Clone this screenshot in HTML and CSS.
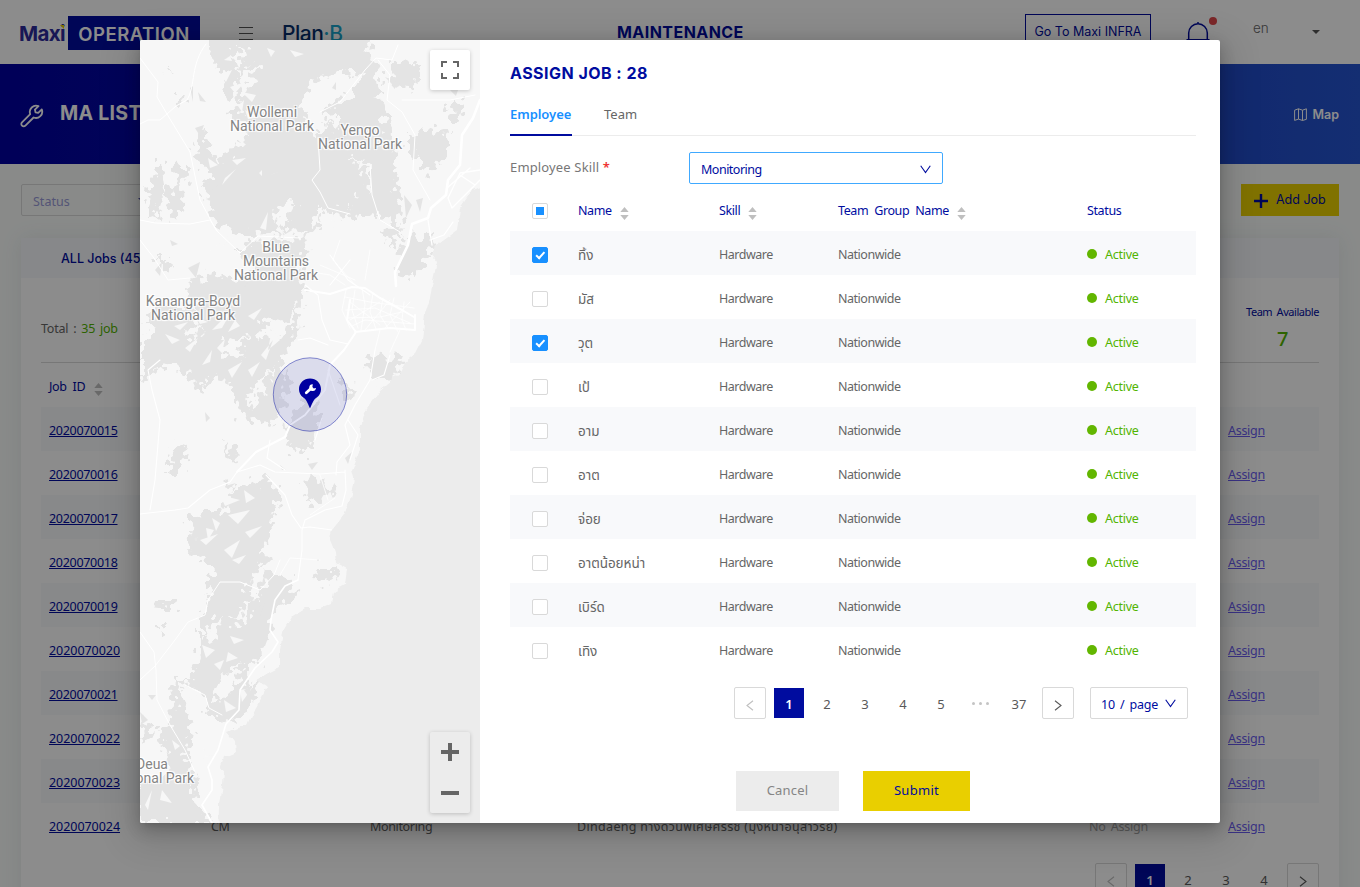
FILE: index.html
```html
<!DOCTYPE html>
<html lang="en">
<head>
<meta charset="utf-8">
<title>Maxi Operation</title>
<link rel="stylesheet" href="styles.css">
</head>
<body>
<svg class="defs" width="0" height="0">
  <symbol id="sorter" viewBox="0 0 9 13"><path d="M4.5 0 8.7 5H.3zM4.5 13 .3 8h8.4z" fill="#bfbfbf"/></symbol>
  <symbol id="left" viewBox="0 0 8 11"><path d="M7 .8 1 5.5 7 10.2" fill="none" stroke="currentColor" stroke-width="1.1"/></symbol>
  <symbol id="right" viewBox="0 0 8 11"><path d="M1 .8 7 5.5 1 10.2" fill="none" stroke="currentColor" stroke-width="1.1"/></symbol>
  <symbol id="down" viewBox="0 0 11 9"><path d="M.7 .7 5.5 7.6 10.3 .7" fill="none" stroke="currentColor" stroke-width="1.1"/></symbol>
</svg>

<div class="page">
  <header class="topbar">
    <div class="logo"><span class="maxi">Maxi<i></i></span><span class="operation">OPERATION</span></div>
    <div class="burger"><i></i><i></i><i></i></div>
    <div class="planb">Plan<b>·B</b></div>
    <div class="heading">MAINTENANCE</div>
    <div class="infra">Go To Maxi INFRA</div>
    <div class="bell">
      <svg width="24" height="26" viewBox="0 0 24 26" fill="none" stroke="#000c9f" stroke-width="1.5"><path d="M2.700 18V11a9.300 9.300 0 0 1 18.600 0v7M.500 17.700h23M12 0v2"/></svg>
      <i></i>
    </div>
    <div class="lang">en</div>
    <div class="caret"></div>
  </header>

  <section class="hero">
    <svg class="tool" width="24" height="24" viewBox="0 0 24 24" fill="none" stroke="#fff" stroke-width="1.8" stroke-linejoin="round"><path d="M18.5 2.2a6.3 6.3 0 0 0-8.3 8L2 18.3a2.3 2.3 0 0 0 3.4 3.4l8.2-8.2a6.3 6.3 0 0 0 8.2-8.1l-3.6 3.4-2.7-.5-.6-2.7z"/></svg>
    <h1>MA LIST</h1>
    <div class="maplink"><svg width="13" height="13" viewBox="0 0 13 13" fill="none" stroke="#fff"><path d="M.6 2.2 4.5.8l4 1.4L12.4.8v10.500l-3.900 1.200-4-1.400L.6 12.400zM4.500.8v10.300M8.500 2.200v10.300"/></svg>Map</div>
  </section>

  <section class="filters">
    <div class="status-select">Status<i></i></div>
    <div class="addjob"><svg width="14" height="14" viewBox="0 0 14 14"><path d="M7 0v14M0 7h14" stroke="#000c9f" stroke-width="2.4"/></svg>Add Job</div>
  </section>

  <main class="card">
    <div class="card-head">ALL Jobs (45)</div>
    <div class="card-body">
      <div class="totals">
        <div class="total">Total : <b>35 job</b></div>
        <div class="avail"><span>Team Available</span><b>7</b></div>
      </div>
      <div class="jobs">
        <div class="job job-head"><span>Job ID <svg width="9" height="13"><use href="#sorter"/></svg></span></div>
        <div class="job"><a>2020070015</a><span></span><span></span><span></span><span></span><a>Assign</a></div>
        <div class="job"><a>2020070016</a><span></span><span></span><span></span><span></span><a>Assign</a></div>
        <div class="job"><a>2020070017</a><span></span><span></span><span></span><span></span><a>Assign</a></div>
        <div class="job"><a>2020070018</a><span></span><span></span><span></span><span></span><a>Assign</a></div>
        <div class="job"><a>2020070019</a><span></span><span></span><span></span><span></span><a>Assign</a></div>
        <div class="job"><a class="wide">2020070020</a><span></span><span></span><span></span><span></span><a>Assign</a></div>
        <div class="job"><a>2020070021</a><span></span><span></span><span></span><span></span><a>Assign</a></div>
        <div class="job"><a class="wide">2020070022</a><span></span><span></span><span></span><span></span><a>Assign</a></div>
        <div class="job"><a class="wide">2020070023</a><span></span><span></span><span></span><span></span><a>Assign</a></div>
        <div class="job"><a class="wide">2020070024</a><span>CM</span><span>Monitoring</span><span class="addr">Dindaeng ทางด่วนพิเศษศรีรัช (มุ่งหน้าอนุสาวรีย์)</span><span class="none">No Assign</span><a>Assign</a></div>
      </div>
      <div class="pager page-pager">
        <span class="box off"><svg width="8" height="11"><use href="#left"/></svg></span><span class="num on">1</span><span class="num">2</span><span class="num">3</span><span class="num">4</span><span class="box"><svg width="8" height="11"><use href="#right"/></svg></span>
      </div>
    </div>
  </main>
</div>

<div class="mask">
  <div class="modal">
    <div class="map">
      <svg class="terrain" width="340" height="783" viewBox="0 0 340 783">
        <defs><filter id="rough" x="0" y="0" width="100%" height="100%"><feTurbulence type="fractalNoise" baseFrequency=".13" numOctaves="2" seed="4"/><feDisplacementMap in="SourceGraphic" scale="26" xChannelSelector="R" yChannelSelector="G"/></filter>
        <filter id="coast" x="0" y="0" width="100%" height="100%"><feTurbulence type="fractalNoise" baseFrequency=".1" numOctaves="2" seed="9"/><feDisplacementMap in="SourceGraphic" scale="6" xChannelSelector="R" yChannelSelector="G"/></filter></defs>
        <rect width="340" height="783" fill="#f7f7f7"/>
        <g filter="url(#rough)" fill="#e4e4e4">
          <path d="M67-10 76 25 85 30 83 55 100 60 90 75 108 82 105 100 95 110 82 112 80 125 60 90 55 112 58 125 70 130 72 140 60 148 72 165 70 180 88 190 102 198 102 215 115 225 105 240 75 235 50 240 48 256 60 270 20 262 5 280 18 290 0 305V340L10 335 25 325 40 330 62 352 75 330 95 350 100 375 130 385 143 370 147 340 140 320 157 300 160 262 165 245 160 220 168 195 180 182 180 168 200 175 220 178 235 172 255 190 262 170 253 125 258 110 250 95 240 55 236 25 232 15 229-10z"/>
          <path d="M250 23 278 22 282 33 272 48 248 46zM268 95 310 88 306 115 288 135 275 115zM312 60 325 62 318 85 308 75zM240 190 262 185 252 210zM262 200 295 195 292 215 270 238 256 232zM15 125 22 125 26 150 15 182 8 160zM35 125 45 124 44 165 32 182 26 155 36 142zM27 25 32 28 29 34zM38 58 45 58 43 68zM15 218 30 218 26 232z"/>
          <path d="M228 315 250 318 266 316 255 338 240 345 230 330zM200 335 218 355 208 360zM135 330 148 340 145 365 133 350zM165 355 178 365 180 380 172 390 168 413 150 412 148 398 150 378zM35 403 46 407 42 430 28 430zM83 400 100 415 92 424zM87 442 95 444 90 450zM52 478 85 470 95 452 128 436 140 452 132 482 125 500 128 530 150 540 156 556 135 570 128 600 118 618 105 645 122 640 112 665 100 682 80 678 58 668 52 690 45 715 58 742 52 760 74 783H0V740L30 735 20 690 33 680 30 640 50 640 60 610 60 580 72 555 65 545 75 530 50 515zM165 440 182 438 195 455 170 465zM175 528 200 528 192 542 176 540zM17 560 35 560 34 570 16 570zM18 584 26 584 20 596zM2 680 15 690 0 705z"/>
        </g>
        <g filter="url(#rough)" fill="#f7f7f7">
          <path d="M170 42 200 30 219 34 217 48 200 62 184 68 178 98 172 90 167 80 163 65zM180 75 200 74 200 83 180 82zM178 83 191 85 190 92 178 91zM210 118 230 126 232 150 228 155 225 130zM211 149 219 152 215 157zM97 5 106 12 98 34 94 20zM108 28 122 20 105 55 98 42zM140 164 155 162 140 190 132 188zM173 171 192 178 212 170 190 190 178 186zM76 205 95 195 110 195 168 192 160 200 110 202zM120 285 145 280 155 263 150 292 122 298zM84 300 110 295 96 310 104 316 82 318zM115 345 135 325 118 358zM105 358 120 350 112 370zM42 290 62 286 52 300zM65 590 82 575 76 600 64 602zM90 580 110 560 104 585zM80 640 104 620 88 658 74 662zM38 640 64 655 70 680 80 685 76 725 60 710 50 680zM118 525 130 522 116 560 108 548z"/>
        </g>
        <path fill="#f7f7f7" d="M105 70 120 77 108 79zM119 133 122 130 122 136zM130 135 141 131 133 134zM92 120 106 118 97 125zM85 138 96 129 82 145zM90 16 84 20 92 21zM116 55 102 52 112 62zM150 10 164 14 155 17zM127 8 135 11 131 17zM90 47 105 42 95 53zM72 290 92 270 82 288zM108 276 122 268 114 280zM62 325 72 310 70 322zM88 330 102 322 92 338zM95 280 88 292 100 286zM45 308 58 298 50 312zM132 288 128 310 140 300zM34 286 48 282 40 290zM56 277 68 282 60 284zM77 308 85 299 82 313zM121 315 133 300 126 320zM108 330 120 322 112 337zM25 294 40 300 32 304zM78 340 88 345 82 348zM80 455 100 460 85 466zM104 450 115 458 106 463zM88 475 110 470 98 484zM66 488 74 490 68 500zM84 510 100 500 92 518zM105 492 122 486 110 498zM60 500 78 494 66 505zM72 478 80 483 76 491zM92 520 106 515 99 524zM62 605 75 610 66 618zM88 612 98 618 86 622zM74 624 84 620 80 630zM90 596 104 600 94 604zM48 645 58 655 50 660zM100 650 112 648 102 662zM84 660 96 668 86 672zM62 680 70 694 64 692zM12 715 26 721 14 726zM22 750 32 763 20 760zM5 765 12 750 8 770zM32 700 40 706 35 710zM120 188 128 172 126 190zM150 200 142 196 156 188zM68 118 78 125 70 128zM80 35 92 30 86 42zM98 66 104 60 102 72z"/>
        <path fill="#e4e4e4" d="M240 95 250 90 252 102 243 104zM285 95 300 100 296 108zM264 155 272 165 266 178zM276 160 283 158 280 172zM245 37 262 44 256 48zM310 50 320 44 316 56zM50 48 53 46 53 62zM58 52 66 62 60 61zM55 88 64 85 60 96zM80 120 92 116 88 124zM72 150 82 142 80 152zM192 48 196 42 196 50zM30 200 38 204 32 206zM15 230 22 222 20 236zM48 228 60 222 56 238zM98 240 112 236 104 248zM65 372 70 378 66 382zM118 378 126 374 122 382zM168 424 178 422 172 430zM140 425 146 430 142 430zM85 446 96 443 88 449zM205 418 212 412 208 424zM115 570 125 562 120 576zM122 602 128 598 125 606zM104 650 112 646 108 656zM8 655 16 655 12 660zM0 672 8 680 2 684zM4 690 12 696 6 700z"/>
        <g fill="none" stroke="#fff" stroke-linecap="round" stroke-linejoin="round">
          <path stroke-width="1" d="M66 4C50 25 56 45 47 60L36 66 27 74 17 57 18 42 0 18M27 74 20 80 8 80 0 84M27 74 50 112 60 160 76 190 100 213 118 196 160 198M0 180 15 183 50 184 70 180 78 192M0 200 14 218 28 240 50 238M178 98 180 130 172 140 180 152 188 168 210 174M180 72 200 62 225 30 236 18 252 20 258 5M238 20 250 35 247 60 262 72 275 95 273 130 290 160M230 125 232 155 240 180 260 192M262 60 310 60 335 55M0 640 15 626 35 600 48 582 65 575 68 560 80 542 100 542 120 550 134 535 140 520M0 592 14 612 16 630 17 660 30 685 45 710 55 732M45 645 65 655 69 668 82 675"/>
          <path stroke-width="2.600" d="M340 60 333 78 322 95 320 125 308 140 306 155 291 168 288 178 272 184 268 205 255 232 256 246"/>
          <path stroke-width="1.300" d="M340 130 320 133 308 158 312 168 340 140M320 135 335 145M307 148 330 128M288 180 292 205M313 182 304 195 290 200"/>
          <path stroke-width="2" d="M165 250 190 254 212 247 225 248 240 258 262 270 274 277M210 260 207 280 216 292 204 310 190 325 185 350 165 375 150 385 145 397 116 412 97 432M215 292 250 288 275 290 275 275"/>
          <path stroke-width="1.100" d="M97 432 90 442 70 450 48 468 35 470 0 474M97 432 120 425 135 432 180 434 205 432M130 400 127 418 145 430M188 330 200 365M182 378 175 400M165 245 178 255 182 280 190 300 208 304M190 215 208 240 230 255M190 245 210 220M158 300 170 298 188 305M20 320 8 330 12 350 20 380 15 440 10 470M235 310 230 340 215 365 205 385 210 405 197 422 196 435M208 380 218 395 210 420M205 430 206 450 202 466 185 470 165 480 162 490 162 510 158 540M126 435 145 455 152 475 161 488 170 487 192 490M250 315 244 335 232 340"/>
          <path stroke-width="1.600" d="M158 540 145 546 135 560 131 580 130 590 138 602 132 612 115 628 100 650 99 670 86 684 78 710 68 727 72 740 72 750 62 765 72 783"/>
          <path stroke-width=".8" d="M206 250 202 270 210 288M215 250 212 270 218 288M222 248 225 265 221 290M233 253 230 272 236 289M243 258 240 275 248 288M254 258 250 275 258 292M264 262 262 280 266 290M205 257 230 262 274 268M206 270 235 268 270 283M206 278 240 277 262 272M212 286 225 280 275 284M210 280 240 262M225 290 250 260M245 288 270 262M210 262 240 285M180 225 215 240M200 200 193 220 215 245M230 210 225 240M160 230 190 235 205 245M240 290 235 310M260 290 250 312M140 535 150 518 180 520M170 475 195 458M180 435 188 460"/>
        </g>
        <g filter="url(#coast)"><path fill="#ececec" d="M350 144 331 152 320 168 317 190 299 203 292 215 297 222 292 245 290 258 285 275 282 300 275 314 265 322 262 332 240 350 225 372 220 388 220 410 212 430 214 438 210 460 204 475 192 490 190 500 195 512 196 522 207 528 205 545 194 552 192 564 180 569 165 569 152 577 143 592 140 610 140 627 130 632 116 640 127 647 122 657 112 674 107 685 87 692 95 702 96 712 84 717 80 728 83 730 82 745 79 765 78 800H350z"/></g>
        <circle cx="170" cy="354.500" r="36.700" fill="#000c9f" fill-opacity=".11" stroke="#000c9f" stroke-opacity=".45"/>
        <path fill="#0000a0" d="M170 338.500c6.200 0 11 4.600 11 10.700 0 3.600-1.700 6.500-4.300 8.300-2.800 1.900-4 4.500-6.700 11-2.700-6.500-3.900-9.100-6.700-11-2.600-1.800-4.300-4.700-4.300-8.300 0-6.100 4.800-10.700 11-10.700z"/>
        <path d="m166.300 352.800 4.600-4.300" stroke="#fff" stroke-width="2.800" stroke-linecap="round"/><path d="M172.800 344.300a3.400 3.400 0 1 0 3.200 3.800l-2.300.4-1.300-1.600z" fill="#fff"/>
      </svg>
      <div class="place wollemi">Wollemi<br>National Park</div>
      <div class="place yengo">Yengo<br>National Park</div>
      <div class="place blue">Blue<br>Mountains<br>National Park</div>
      <div class="place boyd">Kanangra-Boyd<br>National Park</div>
      <div class="place deua">Deua<br>National Park</div>
      <div class="full"><svg width="20" height="20" viewBox="0 0 20 20" fill="none" stroke="#666" stroke-width="2"><path d="M2 7V2h5M13 2h5v5M18 13v5h-5M7 18H2v-5"/></svg></div>
      <div class="zoom"><svg width="18" height="62" viewBox="0 0 18 62" stroke="#666" stroke-width="4"><path d="M0 9h18M9 0v18M0 50h18"/></svg></div>
    </div>

    <div class="panel">
      <h2>ASSIGN JOB : 28</h2>
      <div class="tabs"><span class="tab active">Employee</span><span class="tab">Team</span></div>
      <div class="form"><label>Employee Skill <b>*</b></label><div class="select">Monitoring<svg width="11" height="9"><use href="#down"/></svg></div></div>
      <div class="table">
        <div class="row head"><i class="cb some"></i><span>Name <svg width="9" height="13"><use href="#sorter"/></svg></span><span>Skill <svg width="9" height="13"><use href="#sorter"/></svg></span><span>Team Group Name <svg width="9" height="13"><use href="#sorter"/></svg></span><span>Status</span></div>
        <div class="row"><i class="cb on"></i><span class="th">ทิ้ง</span><span>Hardware</span><span>Nationwide</span><span class="act">Active</span></div>
        <div class="row"><i class="cb"></i><span class="th">มัส</span><span>Hardware</span><span>Nationwide</span><span class="act">Active</span></div>
        <div class="row"><i class="cb on"></i><span class="th">วุต</span><span>Hardware</span><span>Nationwide</span><span class="act">Active</span></div>
        <div class="row"><i class="cb"></i><span class="th">เป้</span><span>Hardware</span><span>Nationwide</span><span class="act">Active</span></div>
        <div class="row"><i class="cb"></i><span class="th">อาม</span><span>Hardware</span><span>Nationwide</span><span class="act">Active</span></div>
        <div class="row"><i class="cb"></i><span class="th">อาต</span><span>Hardware</span><span>Nationwide</span><span class="act">Active</span></div>
        <div class="row"><i class="cb"></i><span class="th">จ่อย</span><span>Hardware</span><span>Nationwide</span><span class="act">Active</span></div>
        <div class="row"><i class="cb"></i><span class="th">อาตน้อยหน่า</span><span>Hardware</span><span>Nationwide</span><span class="act">Active</span></div>
        <div class="row"><i class="cb"></i><span class="th">เบิร์ด</span><span>Hardware</span><span>Nationwide</span><span class="act">Active</span></div>
        <div class="row"><i class="cb"></i><span class="th">เทิง</span><span>Hardware</span><span>Nationwide</span><span class="act">Active</span></div>
      </div>
      <div class="pager modal-pager">
        <span class="box off"><svg width="8" height="11"><use href="#left"/></svg></span><span class="num on">1</span><span class="num">2</span><span class="num">3</span><span class="num">4</span><span class="num">5</span><span class="num dots"><i></i><i></i><i></i></span><span class="num">37</span><span class="box"><svg width="8" height="11"><use href="#right"/></svg></span><span class="size">10 / page<svg width="11" height="9"><use href="#down"/></svg></span>
      </div>
      <div class="actions"><span class="btn cancel">Cancel</span><span class="btn submit">Submit</span></div>
    </div>
  </div>
</div>
</body>
</html>
```
FILE: styles.css
```css
* { box-sizing: border-box; }
html, body { margin: 0; height: 887px; overflow: hidden; }
body { font: 12.5px/18px "Noto Sans", "Noto Sans Thai", sans-serif; color: #666; background: #f9fcfa; position: relative; }
.defs { position: absolute; }
.page { height: 887px; overflow: hidden; }

.topbar { height: 64px; background: #fff; display: flex; align-items: flex-start; padding-left: 19px; font-family: Inter, sans-serif; white-space: nowrap; }
.logo { display: flex; width: 181px; padding-top: 16px; }
.maxi { position: relative; width: 49px; font: 700 20.5px/36px Inter, sans-serif; letter-spacing: -.6px; color: #2d2a9c; }
.maxi i { position: absolute; right: 4px; top: 9px; border-top: 4px solid #e9cf00; border-left: 4px solid transparent; }
.operation { width: 132px; height: 34px; background: #000c9f; color: #fff; font: 600 18.5px/37px Inter, sans-serif; text-align: center; letter-spacing: .5px; }
.burger { width: 14px; margin: 27px 0 0 39px; display: flex; flex-direction: column; gap: 5px; }
.burger i { height: 1px; background: #555; }
.planb { margin: 20px 0 0 29px; width: 62px; font: 500 21px/28px Inter, sans-serif; letter-spacing: -.5px; color: #08306e; }
.planb b { font-weight: 500; color: #1ba8cf; }
.heading { margin: 22px 0 0 273px; width: 128px; font-weight: 700; font-size: 16px; line-height: 21px; letter-spacing: .45px; color: #000c9f; }
.infra { margin: 14px 0 0 280px; width: 126px; height: 36px; border: 1px solid #000c9f; font-size: 12.500px; line-height: 33px; text-align: center; color: #000c9f; }
.bell { position: relative; margin: 22px 0 0 35px; width: 24px; }
.bell i { position: absolute; left: 23px; top: -5px; width: 8px; height: 8px; border-radius: 50%; background: #e0474b; }
.lang { margin: 19px 0 0 43px; width: 59px; font-size: 13.500px; font-weight: 300; }
.caret { margin-top: 30px; border: 4px solid transparent; border-top-color: #555; }

.hero { height: 100px; display: flex; align-items: center; padding: 0 21px 0 20px; background: linear-gradient(90deg, #0000a0, #0d1fa8 40%, #2554d0); color: #fff; }
.tool { margin-top: 4px; }
.hero h1 { margin: 0 auto 0 16px; font: 700 19.500px/24px Inter, sans-serif; padding-bottom: 2px; letter-spacing: .3px; }
.maplink { display: flex; gap: 5px; align-items: center; font: 600 12.500px/18px Inter, sans-serif; padding-top: 1px; }

.filters { display: flex; justify-content: space-between; padding: 20px 21px 0; }
.status-select { display: flex; justify-content: space-between; width: 140px; height: 32px; border: 1px solid #d9d9d9; border-radius: 2px; padding: 8px 16px 0 11px; color: #9a9ad8; }
.status-select i { border: 3px solid transparent; border-top-color: #55a; margin-top: 5px; height: 0; }
.addjob { width: 98px; height: 32px; background: #e9cf00; color: #000c9f; display: flex; align-items: center; gap: 8px; padding: 0 0 0 13px; font: 12.500px/18px Inter, sans-serif; white-space: nowrap; }
.addjob svg { margin-top: 2px; }

.card { margin: 22px 21px 0; height: 700px; background: #fff; box-shadow: 0 0 20px rgba(80, 90, 120, .1); }
.card-head { height: 40px; background: #f6f8fb; padding: 11px 40px; font: 500 12.500px/20px Inter, sans-serif; color: #000c9f; }
.card-body { padding: 0 20px; }
.totals { height: 85px; border-bottom: 1px solid #d9d9d9; display: flex; justify-content: space-between; }
.total { padding-top: 42px; word-spacing: 2px; letter-spacing: -.25px; }
.total b { font-weight: 400; color: #52b400; }
.avail { display: flex; flex-direction: column; align-items: center; padding-top: 25px; font-size: 11px; color: #000c9f; word-spacing: 2px; letter-spacing: -.45px; }
.avail b { font-size: 20px; line-height: 36px; color: #52b400; font-weight: 500; }
.job { display: grid; grid-template-columns: 162px 159px 207px 512px 139px 1fr; height: 44px; padding-left: 8px; line-height: 48px; white-space: nowrap; }
.job:nth-child(even) { background: #f8f9fb; }
.job a { justify-self: start; color: #000c9f; text-decoration: underline; letter-spacing: -.3px; }
.job a.wide { letter-spacing: -.05px; }
.job span { letter-spacing: -.35px; }
.job a:last-child { color: #6a5cf0; }
.job .addr { letter-spacing: .32px; }
.job .none { color: #aaa; word-spacing: 2px; letter-spacing: -.2px; }
.job-head { color: #000c9f; word-spacing: 3px; }
.job-head svg { vertical-align: -5px; margin-left: 3px; }

.pager { display: flex; align-items: center; gap: 8px; color: #595959; font-size: 13px; }
.box { width: 32px; height: 32px; border: 1px solid #d9d9d9; border-radius: 2px; background: #fff; display: flex; align-items: center; justify-content: center; padding-top: 5px; }
.off { color: #bfbfbf; }
.num { width: 30px; height: 30px; line-height: 32px; text-align: center; }
.num.on { background: #000c9f; color: #fff; font-weight: 600; }
.num.dots { display: flex; align-items: center; justify-content: center; gap: 4px; width: 32px; }
.dots i { width: 3px; height: 3px; border-radius: 50%; background: #c4c4c4; }
.page-pager { justify-content: flex-end; padding-top: 16px; }

.mask { position: absolute; inset: 0; background: rgba(0, 0, 0, .45); padding: 40px 140px; }
.modal { width: 1080px; height: 783px; display: flex; background: #fff; border-radius: 2px; overflow: hidden; box-shadow: 0 3px 6px -4px rgba(0, 0, 0, .2), 0 6px 16px rgba(0, 0, 0, .2), 0 9px 36px 8px rgba(0, 0, 0, .14); }

.map { position: relative; width: 340px; height: 783px; overflow: hidden; }
.terrain { display: block; }
.place { position: absolute; transform: translateX(-50%); text-align: center; white-space: nowrap; font: 14px/14px Roboto, sans-serif; color: #858585; text-shadow: 0 0 2px #fff, 1px 1px 1px #fff, -1px -1px 1px #fff, 1px -1px 1px #fff, -1px 1px 1px #fff; }
.wollemi { left: 132px; top: 65px; }
.yengo { left: 220px; top: 83px; }
.blue { left: 136px; top: 200px; }
.boyd { left: 53px; top: 254px; }
.deua { left: 12px; top: 717px; }
.full, .zoom { position: absolute; right: 10px; width: 40px; border-radius: 2px; display: flex; align-items: center; justify-content: center; box-shadow: 0 1px 4px rgba(0, 0, 0, .2); }
.full { top: 10px; height: 40px; background: #fff; }
.zoom { bottom: 10px; height: 81px; background: #ececec; padding-top: 2px; }

.panel { flex: 1; padding: 21px 24px 0 30px; display: flex; flex-direction: column; }
.panel h2 { margin: 0; font: 700 16px/24px Inter, sans-serif; letter-spacing: .47px; color: #000c9f; }
.tabs { display: flex; gap: 32px; height: 51px; border-bottom: 1px solid #ececec; font-size: 13px; }
.tab { padding-top: 20px; height: 51px; }
.tab.active { width: 62px; color: #1890ff; font-weight: 600; border-bottom: 2px solid #000c9f; letter-spacing: -.05px; }
.form { display: flex; padding-top: 16px; }
.form label { width: 179px; padding-top: 6px; font-size: 13px; color: #777; letter-spacing: .15px; }
.form b { color: #e33; font-weight: 600; }
.select { width: 254px; height: 32px; border: 1px solid #40a9ff; border-radius: 2px; display: flex; justify-content: space-between; align-items: center; padding: 3px 11px 0; color: #000c9f; letter-spacing: -.5px; }
.table { padding-top: 3px; }
.row { display: grid; grid-template-columns: 46px 141px 119px 249px 1fr; height: 44px; align-items: center; padding: 4px 0 0 22px; letter-spacing: -.48px; white-space: nowrap; }
.row:nth-child(even) { background: #f8f9fb; }
.head { color: #000c9f; word-spacing: 3px; letter-spacing: -.38px; }
.head svg { vertical-align: -5px; margin-left: 2px; }
.th { font-size: 13.500px; letter-spacing: -.05px; }
.cb { position: relative; width: 16px; height: 16px; border: 1px solid #d9d9d9; border-radius: 2px; background: #fff; }
.some::after { content: ""; position: absolute; inset: 3px; background: #1890ff; }
.cb.on { background: #1890ff; border-color: #1890ff; }
.cb.on::after { content: ""; position: absolute; left: 4.5px; top: 1.5px; width: 5px; height: 8.500px; box-sizing: border-box; border: solid #fff; border-width: 0 2px 2px 0; transform: rotate(42deg); }
.act { display: flex; align-items: center; gap: 8px; color: #52b400; letter-spacing: -.25px; }
.act::before { content: ""; width: 10px; height: 10px; border-radius: 50%; background: #62b600; margin-bottom: 2px; }
.modal-pager { justify-content: flex-end; padding: 16px 8px 0 0; }
.size { margin-left: 8px; width: 98px; height: 32px; border: 1px solid #d9d9d9; border-radius: 2px; display: flex; align-items: center; justify-content: space-between; padding: 3px 11px 0 10px; font-size: 12.500px; color: #000c9f; word-spacing: 2px; letter-spacing: -.2px; white-space: nowrap; }
.size svg { margin-top: -3px; }
.actions { display: flex; gap: 24px; padding: 52px 0 0 226px; }
.btn { height: 40px; line-height: 39px; text-align: center; font-size: 13px; letter-spacing: .2px; }
.cancel { width: 103px; background: #ececec; color: #858585; }
.submit { width: 107px; background: #e9cf00; color: #000c9f; letter-spacing: .3px; }
```
